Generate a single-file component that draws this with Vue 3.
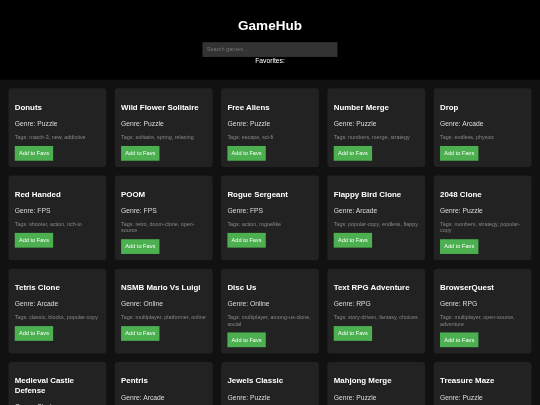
<template>
  <div class="page">
    <header class="top">
      <h1>GameHub</h1>
      <input class="search" type="text" placeholder="Search games..." />
      <div class="favs">Favorites:</div>
    </header>

    <main class="grid">
      <div class="card" v-for="game in games" :key="game.title">
        <h3>{{ game.title }}</h3>
        <p class="genre">Genre: {{ game.genre }}</p>
        <p class="tags">Tags: {{ game.tags }}</p>
        <button class="btn-fav">Add to Favs</button>
      </div>
    </main>
  </div>
</template>

<script setup>
const games = [
  { title: 'Donuts', genre: 'Puzzle', tags: 'match-3, new, addictive' },
  { title: 'Wild Flower Solitaire', genre: 'Puzzle', tags: 'solitaire, spring, relaxing' },
  { title: 'Free Aliens', genre: 'Puzzle', tags: 'escape, sci-fi' },
  { title: 'Number Merge', genre: 'Puzzle', tags: 'numbers, merge, strategy' },
  { title: 'Drop', genre: 'Arcade', tags: 'endless, physics' },
  { title: 'Red Handed', genre: 'FPS', tags: 'shooter, action, itch-io' },
  { title: 'POOM', genre: 'FPS', tags: 'retro, doom-clone, open-source' },
  { title: 'Rogue Sergeant', genre: 'FPS', tags: 'action, roguelike' },
  { title: 'Flappy Bird Clone', genre: 'Arcade', tags: 'popular-copy, endless, flappy' },
  { title: '2048 Clone', genre: 'Puzzle', tags: 'numbers, strategy, popular-copy' },
  { title: 'Tetris Clone', genre: 'Arcade', tags: 'classic, blocks, popular-copy' },
  { title: 'NSMB Mario Vs Luigi', genre: 'Online', tags: 'multiplayer, platformer, online' },
  { title: 'Disc Us', genre: 'Online', tags: 'multiplayer, among-us-clone, social' },
  { title: 'Text RPG Adventure', genre: 'RPG', tags: 'story-driven, fantasy, choices' },
  { title: 'BrowserQuest', genre: 'RPG', tags: 'multiplayer, open-source, adventure' },
  { title: 'Medieval Castle Defense', genre: 'Strategy', tags: 'tower-defense, castle' },
  { title: 'Pentris', genre: 'Arcade', tags: 'blocks, classic' },
  { title: 'Jewels Classic', genre: 'Puzzle', tags: 'match-3, classic' },
  { title: 'Mahjong Merge', genre: 'Puzzle', tags: 'mahjong, merge' },
  { title: 'Treasure Maze', genre: 'Puzzle', tags: 'maze, adventure' }
]
</script>

<style>
html, body {
  margin: 0;
  height: 405px;
  background: #111;
  overflow: hidden;
}
</style>

<style scoped>
/* built at 1280 wide and scaled to the 540 window */
.page {
  width: 1280px;
  height: 960px;
  overflow: hidden;
  transform: scale(0.421875);
  transform-origin: 0 0;
  filter: blur(0.6px);
  font-family: "Liberation Sans", Arial, sans-serif;
  color: #fff;
  background: #111;
}

.top {
  padding: 20px 20px 36px;
  text-align: center;
  background: #000;
}

.top h1 {
  margin: 21.44px 0;
  font-size: 32px;
}

.search {
  display: block;
  box-sizing: border-box;
  width: 320px;
  height: 35.5px;
  margin: 0 auto;
  padding: 10px;
  border: none;
  background: #333;
  color: #fff;
  font-family: inherit;
}

.favs {
  color: #fff;
}

.grid {
  display: grid;
  grid-template-columns: repeat(5, 1fr);
  gap: 20px;
  padding: 20px;
}

.card {
  padding: 15px;
  background: #222;
  border-radius: 8px;
}

.card h3 {
  font-size: 18.72px;
  margin: 18.72px 0;
}

.genre {
  margin: 16px 0;
  color: #ddd;
}

.tags {
  margin: 16px 0 12.8px;
  font-size: 12.8px;
  color: #888;
}

.btn-fav {
  display: block;
  padding: 10px;
  border: none;
  background: #4caf50;
  color: #fff;
  font-family: inherit;
}
</style>
